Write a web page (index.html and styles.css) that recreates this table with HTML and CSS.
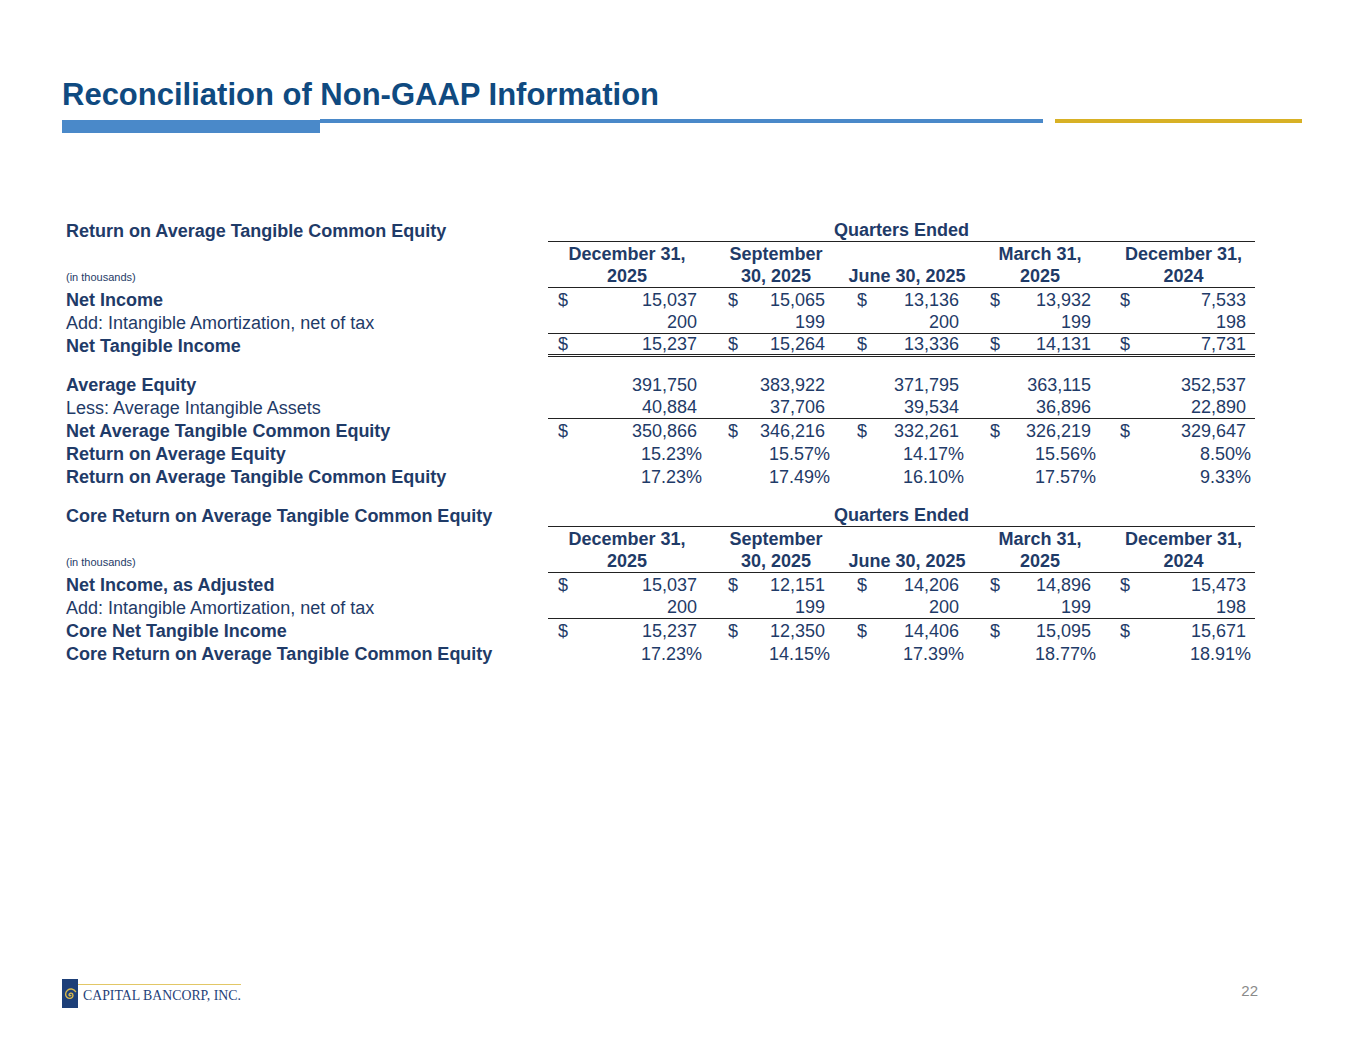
FILE: index.html
```html
<!DOCTYPE html>
<html lang="en">
<head>
<meta charset="utf-8">
<title>Reconciliation of Non-GAAP Information</title>
<link rel="stylesheet" href="styles.css">
</head>
<body>
<div class="page">
  <header class="head">
    <h1 class="title">Reconciliation of Non-GAAP Information</h1>
    <div class="rule">
      <div class="rule-thick"></div>
      <div class="rule-thin"></div>
      <div class="rule-gold"></div>
    </div>
  </header>

  <main class="body">
    <table class="t">
      <colgroup>
        <col class="c-label"><col class="c-d1"><col class="c-v1"><col class="c-d2"><col class="c-v2"><col class="c-d3"><col class="c-v3"><col class="c-d4"><col class="c-v4"><col class="c-d5"><col class="c-v5">
      </colgroup>
      <tbody>
        <tr class="h">
          <td class="lbl b">Return on Average Tangible Common Equity</td>
          <td class="qe" colspan="10">Quarters Ended</td>
        </tr>
        <tr class="h">
          <td class="lbl"></td>
          <th colspan="2">December 31,</th>
          <th colspan="2" class="sh">September</th>
          <th colspan="2" class="sh"></th>
          <th colspan="2" class="sh">March 31,</th>
          <th colspan="2" class="sh">December 31,</th>
        </tr>
        <tr class="h ul">
          <td class="lbl small">(in thousands)</td>
          <th colspan="2">2025</th>
          <th colspan="2" class="sh">30, 2025</th>
          <th colspan="2" class="sh">June 30, 2025</th>
          <th colspan="2" class="sh">2025</th>
          <th colspan="2" class="sh">2024</th>
        </tr>
        <tr class="r">
          <td class="lbl b">Net Income</td>
          <td>$</td><td>15,037</td><td>$</td><td>15,065</td><td>$</td><td>13,136</td><td>$</td><td>13,932</td><td>$</td><td>7,533</td>
        </tr>
        <tr class="r ul">
          <td class="lbl">Add: Intangible Amortization, net of tax</td>
          <td></td><td>200</td><td></td><td>199</td><td></td><td>200</td><td></td><td>199</td><td></td><td>198</td>
        </tr>
        <tr class="r dl">
          <td class="lbl b">Net Tangible Income</td>
          <td>$</td><td>15,237</td><td>$</td><td>15,264</td><td>$</td><td>13,336</td><td>$</td><td>14,131</td><td>$</td><td>7,731</td>
        </tr>
        <tr class="sp"><td colspan="11"></td></tr>
        <tr class="r">
          <td class="lbl b">Average Equity</td>
          <td></td><td>391,750</td><td></td><td>383,922</td><td></td><td>371,795</td><td></td><td>363,115</td><td></td><td>352,537</td>
        </tr>
        <tr class="r ul">
          <td class="lbl">Less: Average Intangible Assets</td>
          <td></td><td>40,884</td><td></td><td>37,706</td><td></td><td>39,534</td><td></td><td>36,896</td><td></td><td>22,890</td>
        </tr>
        <tr class="r">
          <td class="lbl b">Net Average Tangible Common Equity</td>
          <td>$</td><td>350,866</td><td>$</td><td>346,216</td><td>$</td><td>332,261</td><td>$</td><td>326,219</td><td>$</td><td>329,647</td>
        </tr>
        <tr class="r pct">
          <td class="lbl b">Return on Average Equity</td>
          <td></td><td>15.23%</td><td></td><td>15.57%</td><td></td><td>14.17%</td><td></td><td>15.56%</td><td></td><td>8.50%</td>
        </tr>
        <tr class="r pct">
          <td class="lbl b">Return on Average Tangible Common Equity</td>
          <td></td><td>17.23%</td><td></td><td>17.49%</td><td></td><td>16.10%</td><td></td><td>17.57%</td><td></td><td>9.33%</td>
        </tr>
        <tr class="sp"><td colspan="11"></td></tr>
        <tr class="h">
          <td class="lbl b">Core Return on Average Tangible Common Equity</td>
          <td class="qe" colspan="10">Quarters Ended</td>
        </tr>
        <tr class="h">
          <td class="lbl"></td>
          <th colspan="2">December 31,</th>
          <th colspan="2" class="sh">September</th>
          <th colspan="2" class="sh"></th>
          <th colspan="2" class="sh">March 31,</th>
          <th colspan="2" class="sh">December 31,</th>
        </tr>
        <tr class="h ul">
          <td class="lbl small">(in thousands)</td>
          <th colspan="2">2025</th>
          <th colspan="2" class="sh">30, 2025</th>
          <th colspan="2" class="sh">June 30, 2025</th>
          <th colspan="2" class="sh">2025</th>
          <th colspan="2" class="sh">2024</th>
        </tr>
        <tr class="r">
          <td class="lbl b">Net Income, as Adjusted</td>
          <td>$</td><td>15,037</td><td>$</td><td>12,151</td><td>$</td><td>14,206</td><td>$</td><td>14,896</td><td>$</td><td>15,473</td>
        </tr>
        <tr class="r ul">
          <td class="lbl">Add: Intangible Amortization, net of tax</td>
          <td></td><td>200</td><td></td><td>199</td><td></td><td>200</td><td></td><td>199</td><td></td><td>198</td>
        </tr>
        <tr class="r">
          <td class="lbl b">Core Net Tangible Income</td>
          <td>$</td><td>15,237</td><td>$</td><td>12,350</td><td>$</td><td>14,406</td><td>$</td><td>15,095</td><td>$</td><td>15,671</td>
        </tr>
        <tr class="r pct">
          <td class="lbl b">Core Return on Average Tangible Common Equity</td>
          <td></td><td>17.23%</td><td></td><td>14.15%</td><td></td><td>17.39%</td><td></td><td>18.77%</td><td></td><td>18.91%</td>
        </tr>
      </tbody>
    </table>
  </main>

  <footer class="foot">
    <div class="logo">
      <svg class="mark" width="16" height="29" viewBox="0 0 16 29" aria-hidden="true">
        <rect x="0" y="0" width="16" height="29" fill="#1d3f78"/>
        <path d="M8.8 16.4 a1 1 0 0 1 -1.8 -0.6 a2 2 0 0 1 3.6 -0.8 a3 3 0 0 1 -2.4 4.4 a4.2 4.2 0 0 1 -4.6 -4.4 a5.4 5.4 0 0 1 6 -5 a6 6 0 0 1 4 2.6" fill="none" stroke="#d9b94c" stroke-width="1.4" stroke-linecap="round"/>
      </svg>
      <div class="brand">CAPITAL BANCORP, INC.</div>
    </div>
    <div class="pageno">22</div>
  </footer>
</div>
</body>
</html>
```

FILE: styles.css
```css
html, body {
  margin: 0;
  padding: 0;
  background: #ffffff;
}

.page {
  width: 1365px;
  min-height: 1055px;
  display: flex;
  flex-direction: column;
  font-family: "Liberation Sans", Arial, sans-serif;
  color: #1f3b68;
}

.head {
  padding: 77px 0 0 62px;
}

.title {
  margin: 0;
  font-size: 31px;
  line-height: 36px;
  font-weight: 700;
  color: #0f4a80;
}

.rule {
  display: flex;
  align-items: flex-start;
  margin-top: 6px;
}

.rule-thick {
  width: 258px;
  height: 13px;
  margin-top: 1px;
  background: #4a89c9;
}

.rule-thin {
  width: 723px;
  height: 4px;
  background: #4a89c9;
}

.rule-gold {
  width: 247px;
  height: 4px;
  margin-left: 12px;
  background: #d8b125;
}

.body {
  padding: 86px 0 0 62px;
}

.t {
  width: 1193px;
  table-layout: fixed;
  border-collapse: separate;
  border-spacing: 0;
  font-size: 18px;
  color: #1f3b68;
}

.c-label { width: 486px; }
.c-d1 { width: 27px; }
.c-v1 { width: 131px; }
.c-d2 { width: 39px; }
.c-v2 { width: 89px; }
.c-d3 { width: 41px; }
.c-v3 { width: 93px; }
.c-d4 { width: 40px; }
.c-v4 { width: 92px; }
.c-d5 { width: 38px; }
.c-v5 { width: 117px; }

.t tr { height: 23px; }
.t tr.sp { height: 16px; }
.t tr.sp td { line-height: 0; }

.t td, .t th {
  padding: 0;
  line-height: 20px;
  vertical-align: middle;
  white-space: nowrap;
}

.t th {
  font-weight: 700;
  text-align: center;
}

.t th.sh {
  padding-left: 12px;
}

.lbl {
  padding-left: 4px !important;
  text-align: left;
}

.b { font-weight: 700; }

.small {
  font-size: 11px;
}

.qe {
  font-weight: 700;
  text-align: center;
  border-bottom: 1px solid #222;
}

.t tr.ul th,
.t tr.ul td:not(.lbl) {
  border-bottom: 1px solid #222;
}

.t tr.dl td:not(.lbl) {
  border-bottom: 3px double #222;
}

.t tr.r td:nth-child(2n) { text-align: left; }
.t tr.r td:nth-child(2n+3) { text-align: right; padding-right: 9px; }
.t tr.pct td:nth-child(2n+3) { padding-right: 4px; }

.t tr.r td:nth-child(2) { padding-left: 10px; }
.t tr.r td:nth-child(4) { padding-left: 22px; }
.t tr.r td:nth-child(6) { padding-left: 23px; }
.t tr.r td:nth-child(8) { padding-left: 22px; }
.t tr.r td:nth-child(10) { padding-left: 20px; }

.foot {
  margin-top: auto;
  display: flex;
  justify-content: space-between;
  align-items: center;
  padding: 0 107px 47px 62px;
}

.logo {
  display: flex;
  align-items: flex-start;
}

.mark {
  display: block;
}

.brand {
  margin-top: 5px;
  width: 158px;
  border-top: 1.5px solid #e2c766;
  padding: 3px 0 0 5px;
  font-family: "Liberation Serif", "Times New Roman", serif;
  font-size: 13.8px;
  line-height: 16px;
  color: #1f3f78;
  white-space: nowrap;
}

.pageno {
  font-size: 15px;
  color: #8a8a8a;
  line-height: 18px;
  margin-bottom: 6px;
}
```
